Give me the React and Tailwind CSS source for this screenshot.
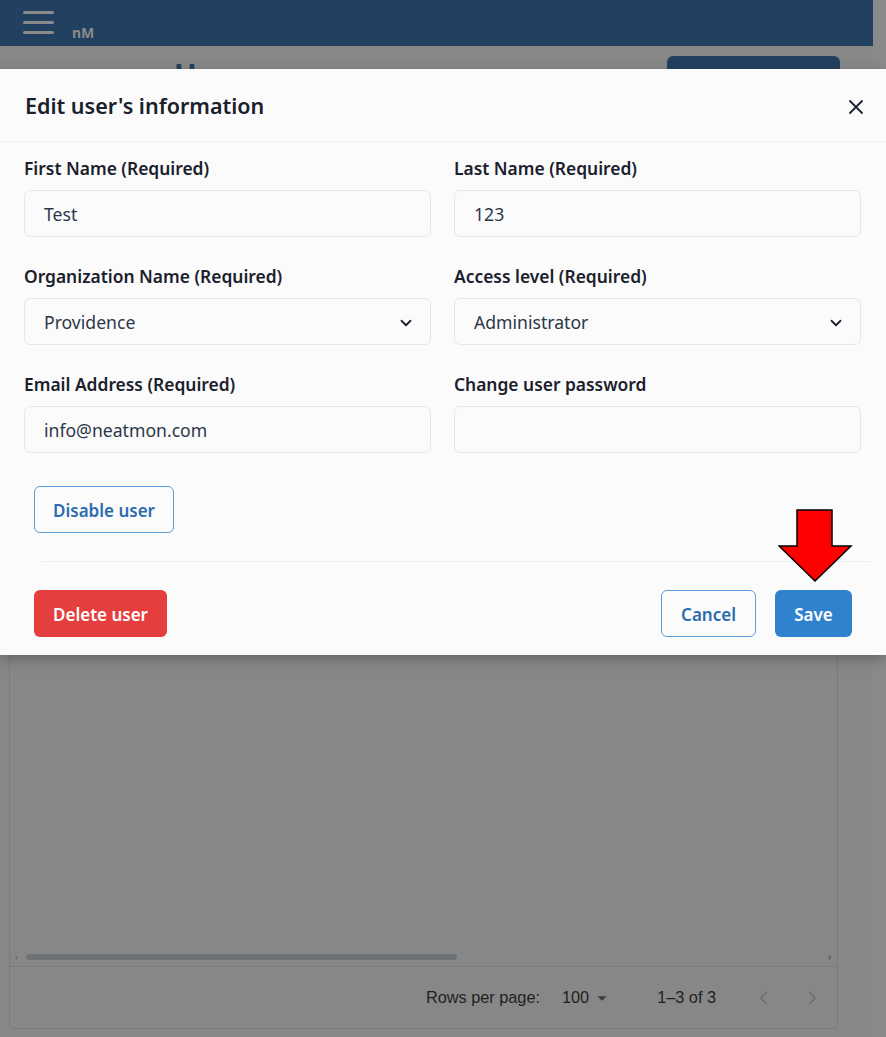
import React from 'react';

const sans = { fontFamily: '"Noto Sans", "Open Sans", sans-serif' };

function Field({ label, value, select }) {
  return (
    <div className="flex flex-col">
      <label className="text-[17.4px] leading-[24px] font-semibold text-[#1a202c] mb-[10px]">{label}</label>
      <div className="h-[47px] rounded-[6px] border border-[#e2e8f0] bg-[#fbfbfb] flex items-center justify-between pl-[19px] pr-[15px] pt-[2px]">
        <span className="text-[17.6px] text-[#2d3748]">{value}</span>
        {select && (
          <svg width="18" height="18" viewBox="0 0 24 24" fill="none" stroke="#1a202c" strokeWidth="2.4" strokeLinecap="round" strokeLinejoin="round">
            <path d="M6 9l6 6 6-6" />
          </svg>
        )}
      </div>
    </div>
  );
}

function App() {
  return (
    <div className="relative w-[886px] h-[1037px] overflow-hidden bg-[#878787] flex" style={sans}>
      {/* page behind the overlay */}
      <div className="w-[873px] flex flex-col">
        <div className="h-[46px] bg-[#22405f] flex items-start">
          <div className="ml-[23px] mt-[11px] flex flex-col gap-[7px]">
            <span className="block w-[31px] h-[3px] rounded bg-[#8b8b8b]" />
            <span className="block w-[31px] h-[3px] rounded bg-[#8b8b8b]" />
            <span className="block w-[31px] h-[3px] rounded bg-[#8b8b8b]" />
          </div>
          <span className="ml-[18px] mt-[22px] text-[14px] font-bold text-[#8a8a8a]">nM</span>
        </div>
        <div className="flex items-start justify-between h-[40px]">
          <span className="ml-[174px] mt-[9px] text-[30px] leading-[40px] font-bold text-[#22405f]">Users</span>
          <div className="mt-[10px] mr-[33px] w-[173px] h-[40px] rounded-[6px] bg-[#22405f]" />
        </div>
        <div className="ml-[9px] w-[829px] mt-[40px] h-[903px] border border-[#7b7b7b] rounded-[4px] flex flex-col justify-end">
          <div className="h-[22px] flex items-center pl-[5px] pr-[6px] pt-[2px] gap-[8px] border-b border-[#7b7b7b]">
            <span className="text-[9px] text-[#555]">‹</span>
            <div className="w-[431px] h-[6px] rounded-full bg-[#6c7276]" />
            <div className="flex-1" />
            <span className="text-[9px] text-[#333]">›</span>
          </div>
          <div className="h-[61px] flex items-center justify-end pr-[15px] text-[16.3px] text-[#1f1f1f]" style={{ fontFamily: '"Liberation Sans", Arial, sans-serif' }}>
            <span>Rows per page:</span>
            <span className="ml-[22px]">100</span>
            <svg className="ml-[2px]" width="22" height="22" viewBox="0 0 24 24"><path d="M7 10l5 5 5-5z" fill="#3a3a3a" /></svg>
            <span className="ml-[44px]">1–3 of 3</span>
            <svg className="ml-[38px]" width="22" height="22" viewBox="0 0 24 24" fill="none" stroke="#6d6d6d" strokeWidth="1.5"><path d="M14 5l-6.5 7 6.5 7" /></svg>
            <svg className="ml-[24px]" width="22" height="22" viewBox="0 0 24 24" fill="none" stroke="#6d6d6d" strokeWidth="1.5"><path d="M10 5l6.5 7-6.5 7" /></svg>
          </div>
        </div>
      </div>
      <div className="flex-1 bg-[#8a8a8a]" />

      {/* modal */}
      <div className="absolute left-0 top-[69px] w-[886px] h-[586px] bg-[#fbfbfb] shadow-[0_4px_12px_rgba(0,0,0,0.25)] flex flex-col">
        <div className="h-[73px] flex items-center justify-between pl-[25px] pr-[22px] pt-[3px] border-b border-[#edf0f3]">
          <h2 className="text-[21.5px] font-semibold text-[#1a202c]">Edit user's information</h2>
          <svg width="16" height="16" viewBox="0 0 16 16" stroke="#1a202c" strokeWidth="1.8" strokeLinecap="round">
            <path d="M2 2l12 12M14 2L2 14" />
          </svg>
        </div>
        <div className="pl-[24px] pr-[25px] pt-[14px] grid grid-cols-2 gap-x-[23px] gap-y-[27px]">
          <Field label="First Name (Required)" value="Test" />
          <Field label="Last Name (Required)" value="123" />
          <Field label="Organization Name (Required)" value="Providence" select />
          <Field label="Access level (Required)" value="Administrator" select />
          <Field label="Email Address (Required)" value="info@neatmon.com" />
          <Field label="Change user password" value="" />
        </div>
        <div className="pl-[34px] pt-[33px]">
          <button className="h-[47px] px-[18px] pt-[2px] rounded-[6px] border border-[#5b9bd8] text-[#2b6cb0] text-[17px] font-semibold">Disable user</button>
        </div>
        <div className="ml-[42px] mr-[16px] mt-[28px] border-t border-[#eceff2]" />
        <div className="flex items-center justify-between pl-[34px] pr-[34px] pt-[28px]">
          <button className="h-[47px] px-[19px] pt-[2px] rounded-[6px] bg-[#e53e3e] text-white text-[17px] font-semibold">Delete user</button>
          <div className="flex gap-[19px]">
            <button className="h-[47px] w-[95px] pt-[2px] rounded-[6px] border border-[#5b9bd8] text-[#2b6cb0] text-[17px] font-semibold">Cancel</button>
            <button className="h-[47px] w-[77px] pt-[2px] rounded-[6px] bg-[#3182ce] text-white text-[17px] font-semibold">Save</button>
          </div>
        </div>
      </div>

      {/* annotation arrow */}
      <svg className="absolute left-[778px] top-[508px]" width="76" height="76" viewBox="0 0 76 76">
        <polygon points="19,2 54,2 54,38 73,38 37,73 1,38 19,38" fill="#ff0000" stroke="#000" strokeWidth="1.5" strokeLinejoin="miter" />
      </svg>
    </div>
  );
}

export default App;
